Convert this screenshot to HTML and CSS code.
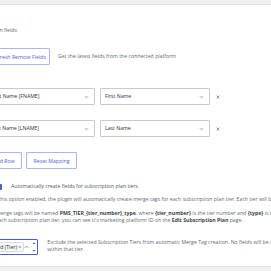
FILE: index.html
```html
<!DOCTYPE html>
<html lang="en">
<head>
    <meta charset="UTF-8">
    <meta name="viewport" content="width=device-width, initial-scale=1.0">
    <title>Merge Fields</title>
    <link rel="stylesheet" href="styles.css">
</head>
<body>
    <div class="topbar"></div>

    <div class="content">
        <p class="intro">Option fields</p>

        <div class="refresh-row">
            <button class="btn" type="button">Refresh Remote Fields</button>
            <span class="hint">Get the latest fields from the connected platform</span>
        </div>

        <div class="mapping">
            <div class="map-row">
                <div class="select wide">
                    <span>First Name [FNAME]</span>
                    <svg class="chev" viewBox="0 0 6 4"><path d="M1 1l2 2 2-2" /></svg>
                </div>
                <div class="select">
                    <span>First Name</span>
                    <svg class="chev" viewBox="0 0 6 4"><path d="M1 1l2 2 2-2" /></svg>
                </div>
                <svg class="remove" viewBox="0 0 4 4"><path d="M0.5 0.5l3 3M3.5 0.5l-3 3" /></svg>
            </div>
            <div class="map-row">
                <div class="select wide">
                    <span>Last Name [LNAME]</span>
                    <svg class="chev" viewBox="0 0 6 4"><path d="M1 1l2 2 2-2" /></svg>
                </div>
                <div class="select">
                    <span>Last Name</span>
                    <svg class="chev" viewBox="0 0 6 4"><path d="M1 1l2 2 2-2" /></svg>
                </div>
                <svg class="remove" viewBox="0 0 4 4"><path d="M0.5 0.5l3 3M3.5 0.5l-3 3" /></svg>
            </div>
        </div>

        <div class="actions">
            <button class="btn add-btn" type="button">Add Row</button>
            <button class="btn reset-btn" type="button">Reset Mapping</button>
        </div>

        <label class="toggle-row">
            <span class="check"></span>
            Automatically create fields for subscription plan tiers
        </label>

        <p class="desc">With this option enabled, the plugin will automatically create merge tags for each subscription plan tier. Each tier will be<br>field.</p>
        <p class="desc">The merge tags will be named <strong>PMS_TIER_{tier_number}_type</strong>, where <strong>{tier_number}</strong> is the tier number and <strong>{type}</strong> is the type<br>For each subscription plan tier, you can see it's marketing platform ID on the <strong>Edit Subscription Plan</strong> page.</p>

        <div class="exclude-row">
            <div class="multi">
                <span class="tag">Gold (Tier) <span class="tag-x">&times;</span></span>
                <svg class="chev-up" viewBox="0 0 6 4"><path d="M1 3l2-2 2 2" /></svg>
                <svg class="spin" viewBox="0 0 4 12"><path d="M0.5 3L2 1.2 3.5 3z M0.5 9L2 10.8 3.5 9z" /></svg>
            </div>
            <p class="hint exclude-hint">Exclude the selected Subscription Tiers from automatic Merge Tag creation. No fields will be created for<br>within that tier.</p>
        </div>
    </div>

    <div class="footer"></div>
</body>
</html>
```

FILE: styles.css
```css
body {
    margin: 0;
    font-family: "Open Sans", "Liberation Sans", sans-serif;
    background: #fff;
    overflow: hidden;
    height: 271px;
}
.topbar {
    height: 4px;
    background: #f0f0f1;
    border-bottom: 1px solid #e2e2e4;
}
.content {
    margin-left: -14px;
    padding-top: 22px;
    font-size: 5.2px;
    line-height: 7px;
    color: #646970;
    white-space: nowrap;
}
p {
    margin: 0;
}
.intro {
    margin-bottom: 14px;
}
.refresh-row {
    display: flex;
    align-items: center;
    gap: 8px;
}
.btn {
    box-sizing: border-box;
    height: 17px;
    padding: 0 6px;
    border: 1px solid #a9b5f3;
    border-radius: 1px;
    background: #fff;
    color: #4b60d8;
    font-family: inherit;
    font-size: 5.2px;
    font-weight: 400;
    cursor: pointer;
}
.refresh-row .btn {
    width: 65px;
    margin-left: -1px;
}
.mapping {
    margin-top: 23px;
    display: flex;
    flex-direction: column;
    gap: 15px;
}
.map-row {
    display: flex;
    align-items: center;
}
.select {
    box-sizing: border-box;
    width: 110px;
    height: 17px;
    margin-right: 6px;
    padding: 0 5px 0 4px;
    border: 1px solid #c9cacd;
    border-radius: 1px;
    display: flex;
    align-items: center;
    justify-content: space-between;
    color: #2c3338;
    font-size: 5.2px;
}
.select.wide {
    width: 109px;
    margin-right: 5px;
}
.chev {
    width: 5px;
    height: 4px;
    fill: none;
    stroke: #6b7076;
    stroke-width: 0.8;
}
.remove {
    width: 4px;
    height: 4px;
    stroke: #8c8f94;
    stroke-width: 0.9;
}
.actions {
    margin-top: 15px;
    display: flex;
    gap: 4px;
}
.add-btn {
    width: 36px;
}
.reset-btn {
    width: 51px;
}
.toggle-row {
    margin-top: 14px;
    padding-left: 9px;
    display: flex;
    align-items: center;
    gap: 9px;
    color: #50575e;
}
.check {
    width: 7px;
    height: 6px;
    border-radius: 1px;
    background: #4b60d8;
}
.desc {
    margin-top: 6px;
    line-height: 6.5px;
}
.desc + .desc {
    margin-top: 1px;
}
.desc strong {
    color: #3c434a;
    font-weight: 700;
}
.exclude-row {
    margin-top: 16px;
    display: flex;
    align-items: flex-start;
    gap: 9px;
}
.multi {
    box-sizing: border-box;
    width: 109px;
    height: 16px;
    padding: 0 1px 0 2px;
    border: 1px solid #4b60d8;
    border-radius: 1px;
    display: flex;
    align-items: center;
}
.tag {
    padding: 1px 2px;
    border: 1px solid #dcdcde;
    border-radius: 2px;
    background: #f6f7f7;
    color: #2c3338;
    font-size: 5.2px;
    line-height: 6px;
}
.tag-x {
    color: #50575e;
}
.chev-up {
    margin-left: auto;
    width: 5px;
    height: 4px;
    fill: none;
    stroke: #50575e;
    stroke-width: 0.8;
}
.spin {
    margin-left: 3px;
    width: 4px;
    height: 12px;
    fill: #646970;
}
.exclude-hint {
    line-height: 7px;
}
.footer {
    margin-top: 11px;
    height: 20px;
    background: #f0f0f1;
    border-top: 1px solid #e2e2e4;
}
```
